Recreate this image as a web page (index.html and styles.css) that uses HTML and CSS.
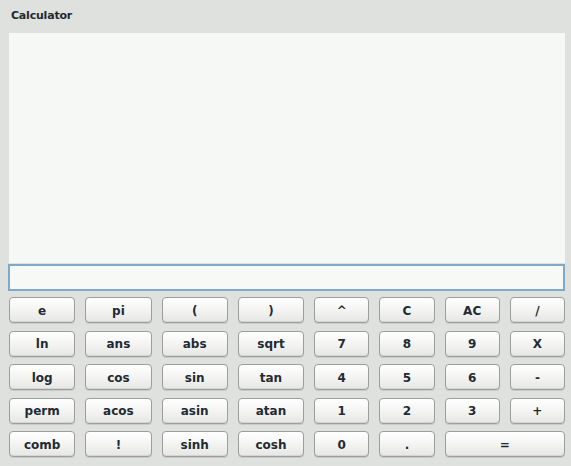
FILE: index.html
```html
<!DOCTYPE html>
<html>
<head>
<meta charset="utf-8">
<link rel="stylesheet" href="styles.css">
</head>
<body>
<div class="app">
  <div class="title">Calculator</div>
  <div class="display"></div>
  <div class="input"></div>
  <div class="keys">
    <button class="key">e</button>
    <button class="key">pi</button>
    <button class="key">(</button>
    <button class="key">)</button>
    <button class="key">^</button>
    <button class="key">C</button>
    <button class="key">AC</button>
    <button class="key">/</button>

    <button class="key">ln</button>
    <button class="key">ans</button>
    <button class="key">abs</button>
    <button class="key">sqrt</button>
    <button class="key">7</button>
    <button class="key">8</button>
    <button class="key">9</button>
    <button class="key">X</button>

    <button class="key">log</button>
    <button class="key">cos</button>
    <button class="key">sin</button>
    <button class="key">tan</button>
    <button class="key">4</button>
    <button class="key">5</button>
    <button class="key">6</button>
    <button class="key">-</button>

    <button class="key">perm</button>
    <button class="key">acos</button>
    <button class="key">asin</button>
    <button class="key">atan</button>
    <button class="key">1</button>
    <button class="key">2</button>
    <button class="key">3</button>
    <button class="key">+</button>

    <button class="key">comb</button>
    <button class="key">!</button>
    <button class="key">sinh</button>
    <button class="key">cosh</button>
    <button class="key">0</button>
    <button class="key">.</button>
    <button class="key wide">=</button>
  </div>
</div>
</body>
</html>
```
FILE: styles.css
```css
html, body {
  margin: 0;
  padding: 0;
  background: #dfe1de;
  font-family: "DejaVu Sans", "Liberation Sans", sans-serif;
}

.app {
  width: 571px;
  height: 466px;
  box-sizing: border-box;
  padding: 0 6px 0 8px;
  background: #dfe1de;
}

.title {
  height: 33px;
  box-sizing: border-box;
  padding: 9px 0 0 3px;
  font-size: 11px;
  font-weight: bold;
  color: #1e2a30;
  letter-spacing: -0.2px;
}

.display {
  margin-left: 1px;
  height: 230px;
  background: #f5f8f4;
}

.input {
  margin-top: 1px;
  height: 27px;
  box-sizing: border-box;
  border: 2px solid #7fa9c9;
  background: #f6f9f6;
}

.keys {
  margin-top: 6px;
  padding-left: 1px;
  display: grid;
  grid-template-columns: repeat(4, 6fr) repeat(4, 5fr);
  grid-auto-rows: 26px;
  column-gap: 10px;
  row-gap: 7.5px;
}

.key {
  margin: 0;
  padding: 1px 0 0;
  border: 1px solid #9c9e9c;
  border-radius: 4px;
  background: linear-gradient(#ffffff, #f1f2f0 60%, #e6e7e5);
  box-shadow: inset 0 -1px 0 #d4d6d3, 0 1px 0 #c9cbc8;
  font-family: "DejaVu Sans", "Liberation Sans", sans-serif;
  font-size: 12px;
  font-weight: bold;
  color: #1f2b33;
  text-align: center;
}

.wide {
  grid-column: span 2;
}
```
